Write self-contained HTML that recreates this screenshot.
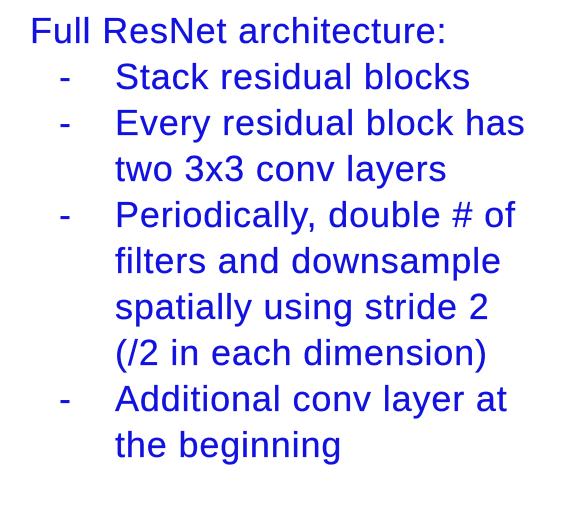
<!DOCTYPE html>
<html><head><style>
body{margin:0;width:573px;height:520px;background:#fff;overflow:hidden;font-family:"Liberation Sans",Arial,sans-serif;color:#1212e0;font-size:36px;letter-spacing:0.85px;-webkit-text-stroke:0.3px #1212e0;}
.l{position:absolute;line-height:46px;white-space:nowrap;}
</style></head><body>
<div class="l" style="left:30px;top:8px">Full ResNet architecture:</div>
<div class="l" style="left:59px;top:54px">-</div>
<div class="l" style="left:115px;top:54px">Stack residual blocks</div>
<div class="l" style="left:59px;top:100px">-</div>
<div class="l" style="left:115px;top:100px">Every residual block has</div>
<div class="l" style="left:115px;top:146px">two 3x3 conv layers</div>
<div class="l" style="left:59px;top:192px">-</div>
<div class="l" style="left:115px;top:192px">Periodically, double # of</div>
<div class="l" style="left:115px;top:238px">filters and downsample</div>
<div class="l" style="left:115px;top:284px">spatially using stride 2</div>
<div class="l" style="left:115px;top:330px">(/2 in each dimension)</div>
<div class="l" style="left:59px;top:376px">-</div>
<div class="l" style="left:115px;top:376px">Additional conv layer at</div>
<div class="l" style="left:115px;top:422px">the beginning</div>
</body></html>
